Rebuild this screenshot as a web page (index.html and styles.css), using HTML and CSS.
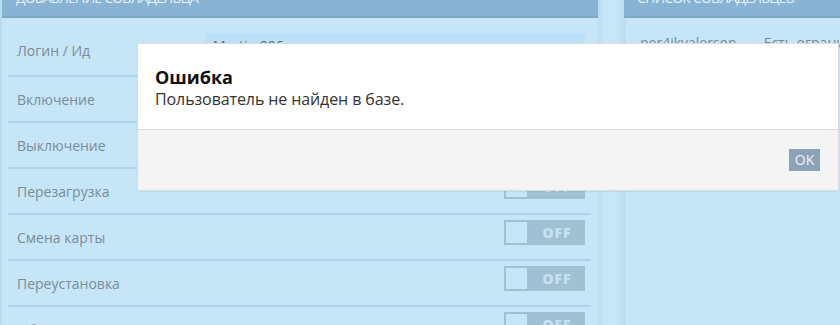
FILE: index.html
```html
<!DOCTYPE html>
<html lang="ru">
<head>
<meta charset="utf-8">
<title>Совладельцы</title>
<link rel="stylesheet" href="styles.css">
</head>
<body>
<div class="page">
  <section class="panel panel-left">
    <div class="panel-head"><span>Добавление совладельца</span></div>
    <div class="panel-body">
      <div class="row row-login">
        <div class="label">Логин / Ид</div>
        <div class="input">Martin 996</div>
      </div>
      <div class="row"><div class="label">Включение</div><div class="toggle"><span class="knob"></span><span class="off">OFF</span></div></div>
      <div class="row"><div class="label">Выключение</div><div class="toggle"><span class="knob"></span><span class="off">OFF</span></div></div>
      <div class="row"><div class="label">Перезагрузка</div><div class="toggle"><span class="knob"></span><span class="off">OFF</span></div></div>
      <div class="row"><div class="label">Смена карты</div><div class="toggle"><span class="knob"></span><span class="off">OFF</span></div></div>
      <div class="row"><div class="label">Переустановка</div><div class="toggle"><span class="knob"></span><span class="off">OFF</span></div></div>
      <div class="row"><div class="label">Обновление</div><div class="toggle"><span class="knob"></span><span class="off">OFF</span></div></div>
    </div>
  </section>
  <div class="divider"></div>
  <section class="panel panel-right">
    <div class="panel-head"><span>Список совладельцев</span></div>
    <div class="panel-body">
      <div class="owner"><span class="owner-name">per4ikvalerson</span><span class="owner-note">Есть ограничения</span></div>
    </div>
  </section>
</div>

<div class="modal">
  <div class="modal-body">
    <div class="modal-title">Ошибка</div>
    <div class="modal-text">Пользователь не найден в базе.</div>
  </div>
  <div class="modal-foot">
    <button class="btn-ok">OK</button>
  </div>
</div>
</body>
</html>
```

FILE: styles.css
```css
html, body {
  margin: 0;
  padding: 0;
}
body {
  background: #c7e7f8;
  font-family: "Open Sans", "Noto Sans", sans-serif;
  width: 840px;
  height: 325px;
  overflow: hidden;
  position: relative;
}
.page {
  display: flex;
  align-items: stretch;
  height: 325px;
  border-left: 2px solid #b9dbf0;
  box-sizing: border-box;
  overflow: hidden;
}
.panel {
  display: flex;
  flex-direction: column;
  min-height: 0;
}
.panel-left {
  width: 596px;
  flex-shrink: 0;
}
.divider {
  width: 26px;
  flex-shrink: 0;
  background: linear-gradient(to right, #bcdcf0 0, #c6e6f7 6px, #c8e8f9 13px, #c6e6f7 19px, #bddcf0 26px);
}
.panel-right {
  flex: 1;
  min-width: 0;
  overflow: hidden;
}
.panel-head {
  flex-shrink: 0;
  height: 16px;
  background: #88b3d3;
  border-bottom: 2px solid #7ea8c8;
  overflow: hidden;
  color: #e6f1f9;
  font-size: 14px;
  text-transform: uppercase;
  letter-spacing: -0.8px;
  white-space: nowrap;
}
.panel-head span {
  display: block;
  line-height: 20px;
  margin-top: -12px;
  padding-left: 14px;
}
.panel-right .panel-head span {
  padding-left: 13px;
}
.panel-body {
  flex: 1;
  min-height: 0;
  overflow: hidden;
  background: #c6e6f7;
  padding: 13px 7px 0 6px;
}
.panel-right .panel-body {
  border-left: 2px solid #bcdcf0;
  padding: 12px 0 0 14px;
}
.row {
  display: flex;
  align-items: center;
  justify-content: space-between;
  height: 44px;
  border-bottom: 2px solid #add3ea;
  padding: 0 6px 0 9px;
}
.row-login {
  height: 38px;
  padding-bottom: 6px;
}
.label {
  font-size: 14px;
  color: #7a8b97;
}
.input {
  width: 380px;
  height: 34px;
  background: #bce0f7;
  border-radius: 2px;
  box-sizing: border-box;
  padding: 3px 8px 0;
  font-size: 14px;
  line-height: 20px;
  color: #5a6b78;
}
.toggle {
  display: flex;
  width: 81px;
  height: 25px;
  background: #a0c1d3;
  margin-bottom: 10px;
  box-sizing: border-box;
}
.knob {
  width: 25px;
  height: 25px;
  box-sizing: border-box;
  border: 2px solid #a0c1d3;
  background: #c6e6f7;
}
.off {
  flex: 1;
  text-align: center;
  font-family: "Open Sans", sans-serif;
  font-weight: 800;
  font-size: 14px;
  line-height: 25px;
  color: #c4e2f3;
  letter-spacing: 1px;
}
.owner {
  display: flex;
  gap: 27px;
  font-size: 14px;
  color: #758795;
  line-height: 26px;
  white-space: nowrap;
}
.modal {
  position: absolute;
  left: 137px;
  top: 43px;
  width: 700px;
  border: 1px solid #d9dde0;
  background: #fff;
  box-shadow: 0 1px 1px rgba(0,0,0,0.05);
}
.modal-body {
  height: 86px;
  padding: 22px 0 0 17px;
  box-sizing: border-box;
  border-bottom: 1px solid #dcdcdc;
}
.modal-title {
  font-weight: bold;
  font-size: 18px;
  line-height: 22px;
  color: #111;
}
.modal-text {
  font-size: 16px;
  letter-spacing: -0.1px;
  line-height: 20px;
  color: #333;
  margin-top: 1px;
}
.modal-foot {
  height: 60px;
  background: #f4f4f4;
  display: flex;
  justify-content: flex-end;
  align-items: flex-start;
  padding: 19px 18px 0 0;
  box-sizing: border-box;
}
.btn-ok {
  width: 31px;
  height: 22px;
  border: 0;
  background: #8aa3b9;
  color: #eef3f7;
  font-family: "Open Sans", sans-serif;
  font-size: 14px;
  padding: 0;
  line-height: 22px;
}
```
